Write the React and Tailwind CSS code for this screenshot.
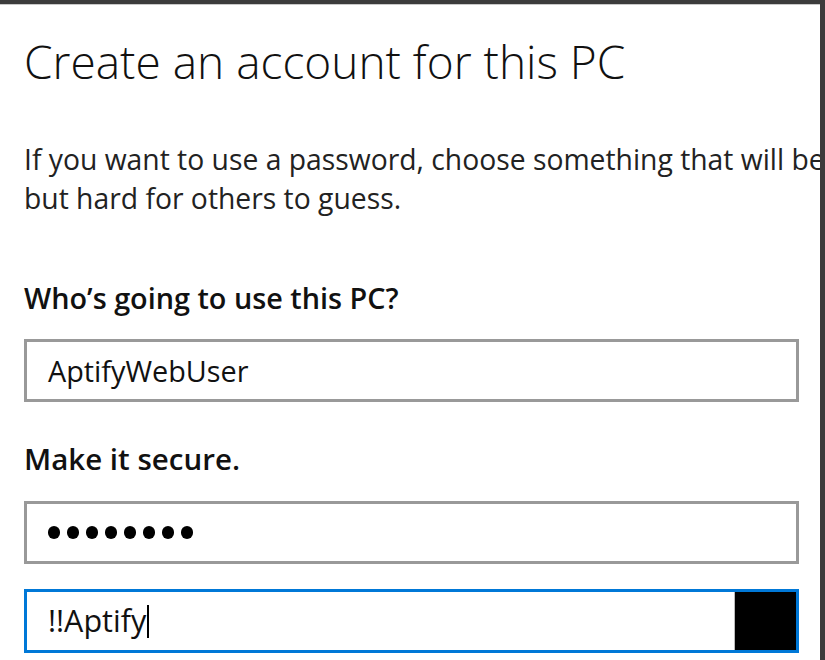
import React from "react";

const font = { fontFamily: '"Open Sans", "Noto Sans", sans-serif' };

function Box({ children, focused, right, tall }) {
  return (
    <div
      className={`flex w-[775px] items-stretch border-[3px] bg-white ${
        tall ? "h-[64px]" : "h-[63px]"
      } ${focused ? "border-[#0078d7]" : "border-[#999999]"}`}
    >
      <div className="flex flex-1 items-center pl-[21px]">{children}</div>
      {right}
    </div>
  );
}

export default function App() {
  return (
    <div className="h-[660px] w-[825px] overflow-hidden bg-[#3c3c3c]" style={font}>
      <div className="mt-[4px] h-[656px] w-[820px] overflow-hidden border-t border-[#c9c9c9] bg-white pl-6">
        {/* Title */}
        <h1 className="mt-[28px] whitespace-nowrap text-[46px] font-light leading-[56px] text-[#111]">
          Create an account for this PC
        </h1>

        {/* Intro */}
        <p className="mt-[51px] whitespace-nowrap text-[28.3px] leading-[39px] text-[#222]">
          If you want to use a password, choose something that will be easy for you to remember
          <br />
          but hard for others to guess.
        </p>

        {/* Who */}
        <div className="mt-[62px] text-[28.8px] font-semibold leading-[36px] text-[#111]">
          Who’s going to use this PC?
        </div>
        <div className="mt-[23px]">
          <Box>
            <span className="text-[28.8px] text-[#111]">AptifyWebUser</span>
          </Box>
        </div>

        {/* Secure */}
        <div className="mt-[39px] text-[29.5px] font-semibold leading-[36px] text-[#111]">
          Make it secure.
        </div>
        <div className="mt-[24px]">
          <Box>
            <span className="flex gap-[7px]">
              {Array.from({ length: 8 }).map((_, i) => (
                <span key={i} className="h-[13px] w-[12px] rounded-full bg-black" />
              ))}
            </span>
          </Box>
        </div>
        <div className="mt-[25px]">
          <Box
            focused
            tall
            right={<div className="w-[62px] border-l border-[#bbbbbb] bg-black" />}
          >
            <span className="text-[30.5px] text-[#111]">!!Aptify</span>
            <span className="ml-[1px] h-[33px] w-[2px] bg-black" />
          </Box>
        </div>
      </div>
    </div>
  );
}
